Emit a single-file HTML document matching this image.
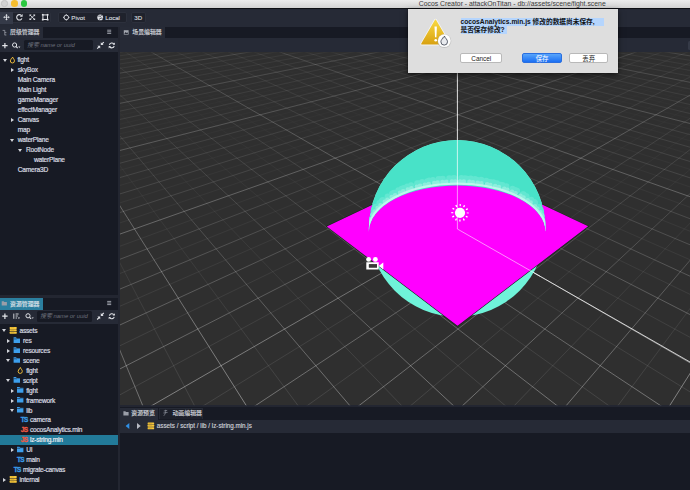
<!DOCTYPE html>
<html><head><meta charset="utf-8"><title>Cocos Creator</title>
<style>
html,body{margin:0;padding:0;}
body{width:690px;height:490px;overflow:hidden;position:relative;background:#171a24;font-family:"Liberation Sans","Noto Sans CJK SC",sans-serif;color:#d6d8de;font-size:7px;}
.abs{position:absolute;}
#titlebar{left:0;top:0;width:690px;height:9px;background:linear-gradient(#ececec,#d3d3d3);border-bottom:0.6px solid #0e0f14;box-sizing:border-box;}
#title{left:418.8px;top:0;height:9px;line-height:8px;font-size:6.85px;color:#3c3c3c;white-space:nowrap;}
.tl{width:6.4px;height:6.4px;border-radius:50%;top:0.3px;}
#toolbar{left:0;top:9px;width:690px;height:17.5px;background:#262a36;}
.grp{background:#1f222c;border-radius:2px;height:11.7px;top:11.5px;box-sizing:border-box;border:0.5px solid #2c303c;}
.tbtxt{font-size:6.15px;color:#d3d6dc;-webkit-text-stroke:0.15px #d3d6dc;line-height:12px;top:11.5px;white-space:nowrap;}
#left{left:0;top:26.5px;width:118px;height:463px;background:#171a24;}
.tabrow{left:0;width:118px;height:11.5px;background:#171a24;}
.tab{left:0;top:0;height:11.7px;background:#272b37;font-size:5.9px;line-height:11.5px;color:#d3d6dc;-webkit-text-stroke:0.15px #d3d6dc;white-space:nowrap;}
.srow{left:0;width:118px;height:14px;background:#262a36;}
.sinput{background:#171a24;border-radius:1.5px;height:10.5px;top:1.5px;font-size:5.9px;line-height:10.5px;color:#6c707c;font-style:italic;white-space:nowrap;overflow:hidden;}
.row{left:0;width:118px;height:10px;line-height:10px;font-size:6.6px;letter-spacing:-0.22px;-webkit-text-stroke:0.2px #d8dae0;color:#d8dae0;margin-top:-0.3px;white-space:nowrap;}
.row span{position:absolute;top:0;}
.arr-r{width:0;height:0;border-left:3px solid #d2d4da;border-top:2.2px solid transparent;border-bottom:2.2px solid transparent;top:2.8px;}
.arr-d{width:0;height:0;border-top:3px solid #d2d4da;border-left:2.4px solid transparent;border-right:2.4px solid transparent;top:3.6px;}
.ts{font-size:6.5px;font-weight:bold;color:#3a9be8;letter-spacing:-0.6px;-webkit-text-stroke:0.3px #3a9be8;}
.js{font-size:6.5px;font-weight:bold;color:#ee5a44;letter-spacing:-0.6px;-webkit-text-stroke:0.3px #ee5a44;}
svg{position:absolute;left:0;top:0;}
#dialog{left:407.5px;top:9px;width:210.6px;height:63.5px;background:#dedede;box-shadow:0 2px 6px rgba(0,0,0,0.55),0 0 1px rgba(0,0,0,0.6);}
.dbtn{top:44.4px;height:10.1px;border-radius:2px;background:#fff;border:0.5px solid #b9b9b9;box-sizing:border-box;font-size:6.45px;line-height:9.3px;text-align:center;color:#222;}
.dtext{left:53px;font-size:6.7px;font-weight:bold;color:#111;line-height:8px;height:8px;white-space:nowrap;background:#b5d5fd;}
</style></head><body>
<!-- title bar -->
<div id="titlebar" class="abs">
<div class="abs tl" style="left:1.3px;background:#d3d3d3;border:0.4px solid #c2c2c2;box-sizing:border-box"></div>
<div class="abs tl" style="left:11.3px;background:#f6be2f;"></div>
<div class="abs tl" style="left:21px;background:#2bc840;"></div>
<div id="title" class="abs">Cocos Creator - attackOnTitan - db://assets/scene/fight.scene</div>
</div>
<!-- toolbar -->
<div id="toolbar" class="abs"></div>
<div class="abs grp" style="left:0;width:51px;"></div>
<div class="abs" style="left:0;top:11.5px;width:13px;height:12px;background:#353a48;border-radius:0 0 0 0;"></div>
<div class="abs grp" style="left:57.5px;width:69px;"></div>
<div class="abs grp" style="left:131px;width:14.5px;"></div>
<div class="abs tbtxt" style="left:71.3px;">Pivot</div>
<div class="abs tbtxt" style="left:105.3px;">Local</div>
<div class="abs tbtxt" style="left:134.3px;">3D</div>

<!-- left panel -->
<div id="left" class="abs"></div>
<div class="abs" style="left:117.5px;top:26.5px;width:2.5px;height:464px;background:#232631;"></div>
<!-- hierarchy -->
<div class="abs tabrow" style="top:26.5px;height:11.8px;"><div class="abs tab" style="width:43px;"><span style="position:absolute;left:10px;">层级管理器</span></div></div>
<div class="abs srow" style="top:38.3px;height:14.1px;"><div class="abs sinput" style="left:24px;width:69px;"><span style="margin-left:3px;">搜索 name or uuid</span></div></div>
<div class="abs row" style="top:55.30px;"><i class="abs arr-d" style="left:2.6px"></i><span style="left:17.5px">fight</span></div>
<div class="abs row" style="top:65.30px;"><i class="abs arr-r" style="left:11px"></i><span style="left:17.8px">skyBox</span></div>
<div class="abs row" style="top:75.30px;"><span style="left:17.8px">Main Camera</span></div>
<div class="abs row" style="top:85.30px;"><span style="left:17.8px">Main Light</span></div>
<div class="abs row" style="top:95.30px;"><span style="left:17.8px">gameManager</span></div>
<div class="abs row" style="top:105.30px;"><span style="left:17.8px">effectManager</span></div>
<div class="abs row" style="top:115.30px;"><i class="abs arr-r" style="left:11px"></i><span style="left:17.8px">Canvas</span></div>
<div class="abs row" style="top:125.30px;"><span style="left:17.8px">map</span></div>
<div class="abs row" style="top:135.30px;"><i class="abs arr-d" style="left:10.4px"></i><span style="left:17.8px">waterPlane</span></div>
<div class="abs row" style="top:145.30px;"><i class="abs arr-d" style="left:18.4px"></i><span style="left:26px">RootNode</span></div>
<div class="abs row" style="top:155.30px;"><span style="left:34px">waterPlane</span></div>
<div class="abs row" style="top:165.30px;"><span style="left:17.8px">Camera3D</span></div>
<!-- divider -->
<div class="abs" style="left:0;top:294.7px;width:118px;height:3px;background:#232631;"></div>
<!-- assets -->
<div class="abs tabrow" style="top:297.7px;height:12px;"><div class="abs tab" style="width:43px;height:12px;line-height:12px;background:#2b7f9f;color:#e6f2f7;"><span style="position:absolute;left:10px;">资源管理器</span></div></div>
<div class="abs srow" style="top:309.7px;height:14px;"><div class="abs sinput" style="left:37px;width:55px;top:1.7px;height:10.3px;line-height:10.3px;"><span style="margin-left:3px;">搜索 name or uuid</span></div></div>
<div class="abs" style="left:0;top:435.2px;width:118px;height:9.7px;background:#227a99;"></div>
<div class="abs row" style="top:326.12px;"><i class="abs arr-d" style="left:2.2px"></i><span style="left:19.5px">assets</span></div>
<div class="abs row" style="top:336.12px;"><i class="abs arr-r" style="left:7px"></i><span style="left:23px">res</span></div>
<div class="abs row" style="top:346.12px;"><i class="abs arr-r" style="left:7px"></i><span style="left:23px">resources</span></div>
<div class="abs row" style="top:356.12px;"><i class="abs arr-d" style="left:6px"></i><span style="left:23px">scene</span></div>
<div class="abs row" style="top:366.12px;"><span style="left:26.2px">fight</span></div>
<div class="abs row" style="top:376.12px;"><i class="abs arr-d" style="left:6px"></i><span style="left:23px">script</span></div>
<div class="abs row" style="top:386.12px;"><i class="abs arr-r" style="left:10.5px"></i><span style="left:26.2px">fight</span></div>
<div class="abs row" style="top:396.12px;"><i class="abs arr-r" style="left:10.5px"></i><span style="left:26.2px">framework</span></div>
<div class="abs row" style="top:406.12px;"><i class="abs arr-d" style="left:9.6px"></i><span style="left:26.2px">lib</span></div>
<div class="abs row" style="top:415.12px;"><span class="ts" style="left:20.7px">TS</span><span style="left:30px">camera</span></div>
<div class="abs row" style="top:425.12px;"><span class="js" style="left:20.7px">JS</span><span style="left:30px">cocosAnalytics.min</span></div>
<div class="abs row" style="top:435.12px;"><span class="js" style="left:20.7px">JS</span><span style="left:30px;color:#fff">lz-string.min</span></div>
<div class="abs row" style="top:445.12px;"><i class="abs arr-r" style="left:10.5px"></i><span style="left:26.2px">UI</span></div>
<div class="abs row" style="top:455.12px;"><span class="ts" style="left:17px">TS</span><span style="left:26.2px">main</span></div>
<div class="abs row" style="top:465.12px;"><span class="ts" style="left:13.7px">TS</span><span style="left:23px">migrate-canvas</span></div>
<div class="abs row" style="top:475.12px;"><i class="abs arr-r" style="left:3px"></i><span style="left:19.5px">internal</span></div>

<!-- scene panel -->
<div class="abs" style="left:120px;top:26.5px;width:570.5px;height:11.6px;background:#171a24;"><div class="abs tab" style="width:45.3px;"><span style="position:absolute;left:12.3px;">场景编辑器</span></div></div>
<div class="abs" style="left:120px;top:38px;width:570.5px;height:14.4px;background:#262a36;"></div>
<div class="abs" style="left:120px;top:52.4px;width:570.5px;height:352.8px;background:#2f2f2f;"></div>
<div class="abs" style="left:687.6px;top:41px;width:3px;height:9px;background:#353a47;border-radius:1.5px 0 0 1.5px;"></div>
<!-- bottom panel -->
<div class="abs" style="left:120px;top:405.2px;width:570.5px;height:2.3px;background:#232631;"></div>
<div class="abs" style="left:120px;top:407.5px;width:570.5px;height:12.2px;background:#171a24;">
<div class="abs tab" style="width:38px;height:12.2px;line-height:11px;"><span style="position:absolute;left:11.3px;">资源预览</span></div>
<div class="abs tab" style="left:39.3px;width:44.2px;height:11.8px;line-height:11px;background:#1d202a;box-sizing:border-box;border:0.5px solid #262a35;border-bottom:0;"><span style="position:absolute;left:12.2px;top:-0.5px;">动画编辑器</span></div></div>
<div class="abs" style="left:120px;top:419.7px;width:570.5px;height:13.6px;background:#262a36;"></div>
<div class="abs" style="left:156.8px;top:419.3px;height:14.5px;line-height:14.5px;font-size:6.28px;color:#cfd2d8;-webkit-text-stroke:0.15px #cfd2d8;white-space:nowrap;">assets / script / lib / lz-string.min.js</div>

<svg width="690" height="490" viewBox="0 0 690 490">
<defs>
<linearGradient id="gh" gradientUnits="userSpaceOnUse" x1="0" y1="52" x2="0" y2="405"><stop offset="0" stop-color="#fff" stop-opacity="0"/><stop offset="0.3" stop-color="#fff" stop-opacity="0.03"/><stop offset="1" stop-color="#fff" stop-opacity="0.105"/></linearGradient>
<linearGradient id="g1" gradientUnits="userSpaceOnUse" x1="0" y1="52" x2="0" y2="405"><stop offset="0" stop-color="#fff" stop-opacity="0.05"/><stop offset="0.45" stop-color="#fff" stop-opacity="0.125"/><stop offset="0.8" stop-color="#fff" stop-opacity="0.26"/><stop offset="1" stop-color="#fff" stop-opacity="0.33"/></linearGradient>
<linearGradient id="g5" gradientUnits="userSpaceOnUse" x1="0" y1="52" x2="0" y2="405"><stop offset="0" stop-color="#fff" stop-opacity="0.115"/><stop offset="0.25" stop-color="#fff" stop-opacity="0.21"/><stop offset="1" stop-color="#fff" stop-opacity="0.4"/></linearGradient>
<clipPath id="sc"><rect x="120" y="52.4" width="570.5" height="352.8"/></clipPath>
<clipPath id="sphclip"><path d="M357 231.5 L368.9 231.5 A88.3 46 0 0 1 545.5 231.5 L560 231.5 L560 130 L357 130Z"/></clipPath>
<clipPath id="circclip"><circle cx="457.2" cy="228.3" r="88.3"/></clipPath>
<clipPath id="planeclip"><polygon points="458,168 588,226 457.5,325.6 327,225.5"/></clipPath>
</defs>
<g clip-path="url(#sc)">
<path d="M122.8 50.0L117.0 50.8M148.1 50.0L117.0 54.4M173.4 50.0L117.0 58.2M198.7 50.0L117.0 62.2M224.0 50.0L117.0 66.6M692.0 50.0L692.0 50.0M249.3 50.0L117.0 71.2M666.7 50.0L692.0 54.1M274.6 50.0L117.0 76.2M641.4 50.0L692.0 58.4M300.0 50.0L117.0 81.5M616.0 50.0L692.0 63.1M325.3 50.0L117.0 87.3M590.7 50.0L692.0 68.1M350.6 50.0L117.0 93.5M565.4 50.0L692.0 73.6M375.9 50.0L117.0 100.3M540.1 50.0L692.0 79.5M401.2 50.0L117.0 107.7M514.8 50.0L692.0 86.0M426.5 50.0L117.0 115.8M489.5 50.0L692.0 93.0M451.8 50.0L117.0 124.7M464.2 50.0L692.0 100.8M477.1 50.0L117.0 134.5M438.9 50.0L692.0 109.4M502.4 50.0L117.0 145.3M413.6 50.0L692.0 118.8M527.7 50.0L117.0 157.4M388.3 50.0L692.0 129.4M553.0 50.0L117.0 171.0M363.0 50.0L692.0 141.3M578.4 50.0L117.0 186.3M337.6 50.0L692.0 154.7M603.7 50.0L117.0 203.8M312.3 50.0L692.0 170.0M629.0 50.0L117.0 223.9M287.0 50.0L692.0 187.6M654.3 50.0L117.0 247.3M261.7 50.0L692.0 208.0M679.6 50.0L117.0 274.7M236.4 50.0L692.0 232.0M692.0 55.7L117.0 307.5M211.1 50.0L692.0 260.6M692.0 68.5L117.0 347.2M185.8 50.0L692.0 295.3M692.0 84.5L117.0 396.4M160.5 50.0L692.0 338.4M692.0 104.7L201.4 407.0M135.2 50.0L692.0 393.1M692.0 131.4L305.3 407.0M117.0 55.1L610.7 407.0M692.0 167.9L409.1 407.0M117.0 77.4L506.9 407.0M692.0 221.1L513.0 407.0M117.0 110.0L403.0 407.0M692.0 305.9L616.9 407.0M117.0 161.8L299.1 407.0M117.0 257.4L195.2 407.0" stroke="url(#gh)" fill="none" stroke-width="1"/>
<path d="M160.7 50.0L117.0 56.2M186.1 50.0L117.0 60.2M211.4 50.0L117.0 64.4M236.7 50.0L117.0 68.8M679.3 50.0L692.0 52.0M287.3 50.0L117.0 78.8M628.7 50.0L692.0 60.7M312.6 50.0L117.0 84.3M603.4 50.0L692.0 65.6M337.9 50.0L117.0 90.4M578.1 50.0L692.0 70.8M363.2 50.0L117.0 96.9M552.8 50.0L692.0 76.5M413.8 50.0L117.0 111.7M502.2 50.0L692.0 89.4M439.2 50.0L117.0 120.1M476.8 50.0L692.0 96.8M464.5 50.0L117.0 129.4M451.5 50.0L692.0 105.0M489.8 50.0L117.0 139.7M426.2 50.0L692.0 114.0M540.4 50.0L117.0 164.0M375.6 50.0L692.0 135.2M565.7 50.0L117.0 178.4M350.3 50.0L692.0 147.8M591.0 50.0L117.0 194.8M325.0 50.0L692.0 162.1M616.3 50.0L117.0 213.5M299.7 50.0L692.0 178.5M666.9 50.0L117.0 260.4M249.1 50.0L692.0 219.5M692.0 50.1L117.0 290.3M223.7 50.0L692.0 245.6M692.0 61.8L117.0 326.3M198.4 50.0L692.0 277.1M692.0 76.0L117.0 370.4M173.1 50.0L692.0 315.6M692.0 117.1L253.3 407.0M122.5 50.0L662.7 407.0M692.0 148.1L357.2 407.0M117.0 65.3L558.8 407.0M692.0 191.8L461.1 407.0M117.0 92.0L454.9 407.0M692.0 258.0L565.0 407.0M117.0 132.6L351.0 407.0M117.0 343.3L143.3 407.0" stroke="url(#g1)" fill="none" stroke-width="1"/>
<path d="M135.4 50.0L117.0 52.5M262.0 50.0L117.0 73.6M654.0 50.0L692.0 56.2M388.5 50.0L117.0 103.9M527.5 50.0L692.0 82.7M515.1 50.0L117.0 151.2M400.9 50.0L692.0 124.0M641.6 50.0L117.0 235.1M274.4 50.0L692.0 197.4M692.0 94.0L149.4 407.0M147.8 50.0L692.0 364.0M692.0 370.4L668.8 407.0M117.0 201.3L247.2 407.0" stroke="url(#g5)" fill="none" stroke-width="1"/>
<!-- axes -->
<line x1="457.4" y1="52" x2="457.4" y2="229" stroke="#fff" stroke-opacity="0.85" stroke-width="1"/>
<line x1="457.4" y1="229" x2="690" y2="362" stroke="#fff" stroke-opacity="0.75" stroke-width="1"/>
<!-- sphere lower part (below plane) -->
<circle cx="457.2" cy="228.3" r="88.3" fill="#6ff3d9"/>
<!-- plane -->
<polygon points="457.5,164.5 588.1,226.3 457.5,325.7 326.8,226.4" fill="#ff00ff" stroke="#0f2a17" stroke-width="1.1" stroke-linejoin="miter"/>
<polygon points="457.5,164.5 588.1,226.3 457.5,325.7 326.8,226.4" fill="#ff00ff"/>
<!-- sphere upper back -->
<g clip-path="url(#sphclip)"><g clip-path="url(#circclip)">
<circle cx="457.2" cy="228.3" r="88.3" fill="#48e2c8"/>
<path d="M365.4 231 A91.8 53 0 0 1 549 231" fill="none" stroke="#62e7d1" stroke-width="6" stroke-linecap="round" stroke-dasharray="0 4.2 0 6.4 0 5 0 7.3 0 3.6 0 5.8"/>
<path d="M366 231 A91.2 51.5 0 0 1 548.4 231" fill="none" stroke="#62e7d1" stroke-width="8" stroke-linecap="round" stroke-dasharray="0 11 0 15 0 9.5 0 13.5"/>
<path d="M367.4 231 A89.8 49.6 0 0 1 547 231" fill="none" stroke="#8ceedd" stroke-width="4.6" stroke-linecap="round" stroke-dasharray="0 3.4 0 4.8 0 3.9 0 5.6"/>
<path d="M368.4 231 A88.8 47.4 0 0 1 546 231" fill="none" stroke="#bdf6ec" stroke-width="2.4"/>
</g></g>
<line x1="457.4" y1="140" x2="457.4" y2="184" stroke="#fff" stroke-opacity="0.7" stroke-width="1"/>
<line x1="457.4" y1="184" x2="457.4" y2="229" stroke="#fff" stroke-opacity="0.55" stroke-width="1"/>
<line x1="457.4" y1="229" x2="540" y2="276.2" stroke="#fff" stroke-opacity="0.55" stroke-width="1"/>
<!-- light icon -->
<circle cx="460" cy="212.8" r="5.1" fill="#fff"/>
<circle cx="460" cy="212.8" r="7.7" fill="none" stroke="#fff" stroke-width="2" stroke-dasharray="1.3 2.7317" stroke-dashoffset="0.65"/>
<!-- camera icon -->
<g fill="#fff"><circle cx="368.6" cy="259.4" r="2.4"/><circle cx="375.4" cy="259.4" r="2.4"/><path d="M366.3 262.3h12.4v7.2h-12.4z M368.9 264.3v3.2h8.1v-3.2z" fill-rule="evenodd"/><path d="M378.7 266l4.6 -3.6v7.2z"/></g>
<rect x="368.9" y="264.3" width="8.1" height="3.2" fill="#3a3a3a"/>
</g>
</svg>


<svg width="690" height="490" viewBox="0 0 690 490" style="pointer-events:none">
<defs>
<g id="flame"><path transform="scale(0.9)" d="M0.2 -3.3 C0.6 -1.8 2.3 -0.8 2.3 1 A2.3 2.3 0 0 1 -2.3 1 C-2.3 -0.3 -1.2 -0.8 -1 -1.9 C-0.3 -1.6 0 -2.3 0.2 -3.3Z" fill="none" stroke="#f6c23c" stroke-width="1.05" stroke-linejoin="round"/></g>
<g id="folder"><path d="M-3.2 -2.8 h2.4 l0.7 0.8 h3.3 v4.8 h-6.4z" fill="#3d9fec"/><path d="M-3.2 -1.2 h3.1 l0.6 -0.6 h2.7" fill="none" stroke="#171a24" stroke-width="0.55"/></g>
<g id="db"><rect x="-3.5" y="-3.4" width="7" height="2" rx="0.5" fill="#f7c83c"/><rect x="-3.5" y="-1" width="7" height="2" rx="0.5" fill="#f7c83c"/><rect x="-3.5" y="1.4" width="7" height="2" rx="0.5" fill="#f7c83c"/><rect x="-2.6" y="-2.7" width="3.6" height="0.5" fill="#c79a22"/><rect x="-2.6" y="-0.3" width="3.6" height="0.5" fill="#c79a22"/><rect x="-2.6" y="2.1" width="3.6" height="0.5" fill="#c79a22"/></g>
<g id="plus"><path d="M-2.7 0H2.7M0 -2.7V2.7" stroke="#e4e6ea" stroke-width="1.2" fill="none"/></g>
<g id="search"><circle cx="0" cy="0" r="2.1" fill="none" stroke="#e0e2e7" stroke-width="1"/><path d="M1.5 1.5L3.1 3.1" stroke="#e0e2e7" stroke-width="1.1"/><path d="M3.6 1.6h2.2l-1.1 1.3z" fill="#e0e2e7"/></g>
<g id="collapse"><path d="M3.3 -3.3L1.2 -1.2M-3.3 3.3L-1.2 1.2" stroke="#e0e2e7" stroke-width="1.2"/><path d="M0.3 -3.1V-0.3H3.1zM-0.3 3.1V0.3H-3.1z" fill="#e0e2e7"/></g>
<g id="refresh"><path d="M-2.4 -0.6A2.5 2.5 0 0 1 2 -1.5M2.4 0.6A2.5 2.5 0 0 1 -2 1.5" fill="none" stroke="#e0e2e7" stroke-width="1.05"/><path d="M3.1 -3v2.3h-2.3zM-3.1 3v-2.3h2.3z" fill="#e0e2e7"/></g>
<g id="menu"><path d="M-2 -1.6H2M-2 0H2M-2 1.6H2" stroke="#b9bcc5" stroke-width="0.8"/></g>
<g id="fold2"><path d="M-2.6 -2.1h2l0.6 0.7h2.6v3.6h-5.2z" fill="#9a9ea8"/></g>
</defs>
<!-- toolbar icons -->
<g stroke="#dfe1e6" fill="none" stroke-width="0.9">
<path d="M4.2 17.2H8.8M6.5 14.9V19.5"/>
</g>
<g fill="#dfe1e6">
<path d="M6.5 13.9l1.3 1.5h-2.6zM6.5 20.5l1.3 -1.5h-2.6zM3.2 17.2l1.5 -1.3v2.6zM9.8 17.2l-1.5 -1.3v2.6z"/>
</g>
<path d="M21.3 15.4A2.7 2.7 0 1 0 21.9 18.4" fill="none" stroke="#dfe1e6" stroke-width="1.1"/>
<path d="M22.6 13.9v2.9h-2.9z" fill="#dfe1e6"/>
<g stroke="#dfe1e6" stroke-width="0.9"><path d="M30 14.9L34.6 19.5M34.6 14.9L30 19.5"/></g>
<g fill="#dfe1e6"><path d="M29.5 14.4h2.1l-2.1 2.1zM35.1 14.4v2.1l-2.1 -2.1zM29.5 20v-2.1l2.1 2.1zM35.1 20h-2.1l2.1 -2.1z"/></g>
<rect x="42.9" y="14.9" width="4.6" height="4.6" fill="none" stroke="#dfe1e6" stroke-width="1"/>
<g fill="#dfe1e6"><rect x="41.9" y="13.9" width="1.7" height="1.7"/><rect x="46.8" y="13.9" width="1.7" height="1.7"/><rect x="41.9" y="18.8" width="1.7" height="1.7"/><rect x="46.8" y="18.8" width="1.7" height="1.7"/></g>
<!-- pivot -->
<circle cx="66.3" cy="17.4" r="2.3" fill="none" stroke="#dfe1e6" stroke-width="0.9"/>
<path d="M66.3 14.2v1.2M66.3 19.4v1.2M63.1 17.4h1.2M68.3 17.4h1.2" stroke="#dfe1e6" stroke-width="0.8"/>
<!-- local globe -->
<circle cx="100.2" cy="17.4" r="2.9" fill="#dfe1e6"/>
<path d="M98.2 16.2c1 -0.6 1.6 0.4 2.4 0.2c0.6 -0.2 0.4 -1.2 1.2 -1.4M99 19.4c0.4 -0.8 1.4 -0.6 2 -1.2c0.4 -0.4 1.2 -0.2 1.6 0.2" stroke="#1d202a" stroke-width="0.7" fill="none"/>
<!-- hierarchy tab icon -->
<path d="M2.6 30.4h2.2M4.8 30.4v4.8M4.8 32.6h1.6M4.8 35h1.6" stroke="#a8abb4" stroke-width="0.7" fill="none"/>
<use href="#menu" x="109.2" y="31.8"/>
<use href="#menu" x="109.2" y="303"/>
<!-- scene tab icon -->
<rect x="123.8" y="30.2" width="4.8" height="4.4" fill="#a3a7b0"/><path d="M124.3 34.1l1.2 -2.2l1 1.2l0.9 -0.8l0.7 1.8z" fill="#2a2e3a"/>
<!-- hierarchy search row -->
<use href="#plus" x="4.9" y="45.6"/>
<use href="#search" x="14.6" y="45"/>
<use href="#collapse" x="100.5" y="45.4"/>
<use href="#refresh" x="111.8" y="45.4"/>
<use href="#flame" x="12.4" y="60"/>
<!-- assets tab -->
<use href="#fold2" x="4.3" y="303.3"/>
<use href="#plus" x="4.9" y="316.2"/>
<g stroke="#e0e2e7" stroke-width="0.9" fill="none"><path d="M13.8 313.6v5.2M15.6 314h3M15.6 316h2.2M15.6 318h1.4"/></g><path d="M17.8 317.6h2.2l-1.1 1.3z" fill="#e0e2e7"/>
<use href="#search" x="28" y="315.8"/>
<use href="#collapse" x="100.5" y="316.2"/>
<use href="#refresh" x="111.8" y="316.2"/>
<!-- assets tree icons -->
<use href="#db" x="13.2" y="330.30"/>
<use href="#folder" x="16.8" y="340.14"/>
<use href="#folder" x="16.8" y="350.08"/>
<use href="#folder" x="16.8" y="360.02"/>
<use href="#folder" x="16.8" y="379.90"/>
<use href="#folder" x="20.2" y="389.84"/>
<use href="#folder" x="20.2" y="399.78"/>
<use href="#folder" x="20.2" y="409.72"/>
<use href="#folder" x="20.2" y="449.48"/>
<use href="#flame" x="20.2" y="370.46"/>
<use href="#db" x="13.2" y="479.40"/>
<!-- bottom panel -->
<use href="#fold2" x="126" y="413.3"/>
<path d="M163.8 411l3.4 -0.6M163.4 413l4.2 -0.6M165.6 409.8c0.4 2 -0.4 4.4 -1.8 6" stroke="#8d919c" stroke-width="0.7" fill="none"/>
<path d="M129.3 423.1v6l-3.7 -3z" fill="#2f8fe6"/>
<path d="M137 423.1v6l3.7 -3z" fill="#b8bbc4"/>
<use href="#db" x="150.9" y="425.8" transform="translate(150.9 425.8) scale(0.93 1) translate(-150.9 -425.8)"/>
</svg>

<!-- dialog -->
<div id="dialog" class="abs">
<svg width="211" height="64" viewBox="407.5 9 211 64" style="left:0;top:0">
<defs><linearGradient id="wg" x1="0" y1="0" x2="0" y2="1"><stop offset="0" stop-color="#f8d840"/><stop offset="1" stop-color="#d9a212"/></linearGradient>
<radialGradient id="bg2" cx="0.5" cy="0.4" r="0.6"><stop offset="0" stop-color="#fff"/><stop offset="1" stop-color="#ececec"/></radialGradient></defs>
<path d="M435 20.3 L448.6 43.9 L421.4 43.9Z" fill="url(#wg)" stroke="#f4f4f4" stroke-width="3" stroke-linejoin="round"/>
<path d="M435 20.3 L448.6 43.9 L421.4 43.9Z" fill="url(#wg)" stroke="url(#wg)" stroke-width="1.4" stroke-linejoin="round"/>
<path d="M434 26.6h2.4l-0.5 10.6h-1.4z" fill="#fff"/><circle cx="435.2" cy="40.2" r="1.3" fill="#fff"/>
<circle cx="443.8" cy="41" r="7" fill="#a8a8a8" fill-opacity="0.55"/>
<circle cx="443.8" cy="40.7" r="6.4" fill="#fdfdfd"/>
<path d="M443.9 36 C444.4 38 447 39.3 447 41.8 A3.3 3.3 0 0 1 440.4 41.8 C440.4 40 441.8 39.4 442.2 37.8 C443 38.2 443.6 37.4 443.9 36Z" fill="#e9ebef" stroke="#4a4f5c" stroke-width="0.9" stroke-linejoin="round"/>
</svg>
<div class="abs dtext" style="top:8.5px;width:143.5px;">cocosAnalytics.min.js 修改的数据尚未保存,</div>
<div class="abs dtext" style="top:16.5px;width:46px;">是否保存修改?</div>
<div class="abs dbtn" style="left:52.8px;width:42px;">Cancel</div>
<div class="abs dbtn" style="left:114.6px;width:40px;background:linear-gradient(#58a5fb,#1b6ff3);border-color:#2a6fe0;color:#fff;">保存</div>
<div class="abs dbtn" style="left:161.6px;width:39.2px;">丢弃</div>
</div>
</body></html>
